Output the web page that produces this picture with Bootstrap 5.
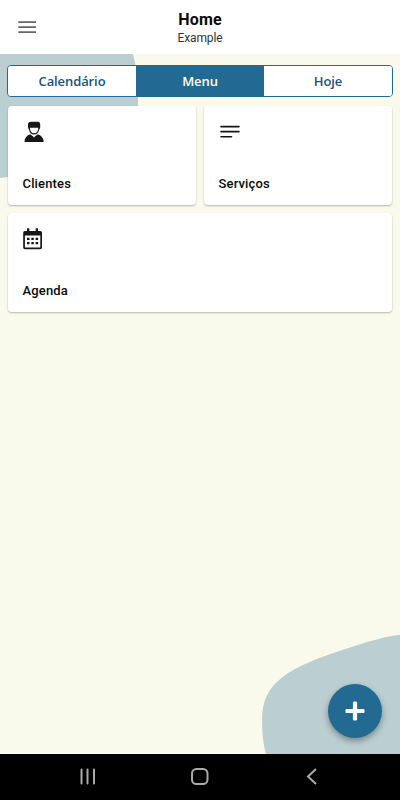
<!DOCTYPE html>
<html lang="pt">
<head>
<meta charset="utf-8">
<meta name="viewport" content="width=device-width, initial-scale=1">
<title>Home</title>
<link href="https://cdn.jsdelivr.net/npm/bootstrap@5.3.0/dist/css/bootstrap.min.css" rel="stylesheet">
<style>
  body { font-family: Roboto, "Liberation Sans", sans-serif; color: #0a0a0a; background: #f9faeb; }
  svg { display: block; }
  .app-bar { height: 54px; }
  .app-bar > * { flex: 1 1 0; }
  .menu-icon { margin-left: 18px; }
  .app-title { font-size: 16px; font-weight: 700; line-height: 19px; margin: 10px 0 0; letter-spacing: .15px; }
  .app-sub { font-size: 12px; line-height: 16px; color: #333; margin-top: 1px; letter-spacing: -.15px; }
  .page-area { background: #f9faeb; padding: 11px 7px 0; }
  .blob { position: absolute; z-index: 0; }
  .segments { height: 32px; border: 1px solid #236a93; border-radius: 4px; font-family: "Open Sans", "Noto Sans", sans-serif; }
  .segments .btn { font-size: 13px; font-weight: 600; line-height: 30px; padding: 0; border: 0; border-radius: 0; color: #1d5278; background: #fff; letter-spacing: -.1px; }
  .segments .btn.active { color: #fff; background: #236a93; }
  .tiles { margin: 1px 1px 0; --bs-gutter-x: 8px; --bs-gutter-y: 8px; }
  .tile { height: 99px; border: 0; border-radius: 4px; padding: 15px 14.5px 13px; box-shadow: 0 1px 2px rgba(0,0,0,.27); }
  .tile svg { margin-left: -.8px; }
  .tile-name { font-size: 13px; font-weight: 500; line-height: 16px; color: #0a0a0a; letter-spacing: .15px; }
  .fab { position: absolute; right: 18px; bottom: 16px; width: 54px; height: 54px; background: #236a93; border: 0; box-shadow: 0 3px 6px rgba(0,0,0,.35); }
  .system-bar { height: 46px; background: #000; }
  .system-bar svg { margin: 0 44px; }
</style>
</head>
<body>
<div class="d-flex flex-column vh-100 overflow-hidden">
  <header class="app-bar d-flex bg-white">
    <div class="d-flex align-items-center">
      <svg class="menu-icon" width="18" height="14" viewBox="0 0 18 14" stroke="#666" stroke-width="1.700"><path d="M.3 2.200h17.700M.3 7.200h17.700M.3 12.200h17.700"/></svg>
    </div>
    <div class="text-center">
      <h1 class="app-title">Home</h1>
      <div class="app-sub">Example</div>
    </div>
    <div></div>
  </header>

  <main class="page-area position-relative flex-grow-1 overflow-hidden">
    <svg class="blob top-0 start-0" width="140" height="126" viewBox="0 0 140 126"><path fill="#bbced2" d="M0 0H133Q138 19 138 42V60C136 90 70 118 0 124Z"/></svg>
    <svg class="blob bottom-0 end-0" width="140" height="121" viewBox="260 633 140 121"><path fill="#bbced2" d="M400 634.700C382 637 363 643 347 648.500C320 657.500 298 665 282 677.500C268 688.500 262.500 701 262.100 718C261.900 732 263 743 266 754H400Z"/></svg>

    <div class="position-relative">
      <div class="segments d-flex overflow-hidden" role="group">
        <button class="btn flex-fill w-100" type="button">Calendário</button>
        <button class="btn flex-fill w-100 active" type="button">Menu</button>
        <button class="btn flex-fill w-100" type="button">Hoje</button>
      </div>
      <div class="tiles row">
        <div class="col-6 px-0 pe-1">
          <div class="card tile justify-content-between">
            <svg width="24" height="22" viewBox="0 0 24 22"><path fill="#171717" d="M6 3.200Q6 .7 9 .7h6.500q2.700 0 2.700 2.500v3.500q-.3 1.200-.9 1.500C16.500 11.500 14.900 13.600 12 13.600S7.500 11.500 6.900 8.200Q6 7.500 6 5.500ZM8 13.200l2.600 1.800 1.400 1.500 1.400-1.500 2.600-1.800C19.500 14.500 21.700 17 21.700 20.900H2.500C2.500 17 4.500 14.500 8 13.200Z"/><path fill="#fff" d="M7.900 6.800h8.400C16.300 10.300 14.700 12.300 12.100 12.300S7.900 10.300 7.900 6.800Z"/></svg>
            <div class="tile-name">Clientes</div>
          </div>
        </div>
        <div class="col-6 px-0 ps-1">
          <div class="card tile justify-content-between">
            <svg width="24" height="22" viewBox="0 0 24 22" fill="none" stroke="#151515" stroke-width="1.600" stroke-linecap="round"><path d="M3 5.600h18M3 10.600h18M3 15.700h10.500"/></svg>
            <div class="tile-name">Serviços</div>
          </div>
        </div>
        <div class="col-12 px-0">
          <div class="card tile justify-content-between">
            <svg width="24" height="22" viewBox="0 0 24 22" fill="#171717"><path fill-rule="evenodd" d="M5 .3h2.300v2.700h6.400V.3H16v2.700h2.300q1.700 0 1.700 1.700V19.500q0 1.700-1.700 1.700H2.900q-1.700 0-1.700-1.700V4.700q0-1.700 1.700-1.700H5ZM2.900 7.400v12.100h15.400v-12.100Z"/><path d="M5 9.700h2.500V12H5ZM9.300 9.700h2.500V12H9.300ZM13.600 9.700h2.500V12h-2.500ZM5 13.900h2.500v2.300H5ZM9.300 13.900h2.500v2.300H9.300ZM13.600 13.900h2.500v2.300h-2.500Z"/></svg>
            <div class="tile-name">Agenda</div>
          </div>
        </div>
      </div>
    </div>

    <button class="fab btn rounded-circle d-flex align-items-center justify-content-center p-0" type="button" aria-label="Adicionar">
      <svg width="20" height="20" viewBox="0 0 20 20" fill="#fff"><rect x="7.900" y=".5" width="4.200" height="19" rx="1.200"/><rect x=".5" y="7.900" width="19" height="4.200" rx="1.200"/></svg>
    </button>
  </main>

  <nav class="system-bar d-flex align-items-center justify-content-center">
    <svg width="24" height="20" viewBox="0 0 24 20" stroke="#aaa" stroke-width="2" stroke-linecap="round"><path d="M5.500 2.500v14M11.500 2.500v14M18 2.500v14"/></svg>
    <svg width="24" height="20" viewBox="0 0 24 20" fill="none" stroke="#aaa" stroke-width="2"><rect x="4" y="2" width="15.500" height="15" rx="4.500"/></svg>
    <svg width="24" height="20" viewBox="0 0 24 20" fill="none" stroke="#aaa" stroke-width="2"><path d="M16 2 8 9.500l8 7.500"/></svg>
  </nav>
</div>
<script src="https://cdn.jsdelivr.net/npm/bootstrap@5.3.0/dist/js/bootstrap.bundle.min.js"></script>
</body>
</html>
